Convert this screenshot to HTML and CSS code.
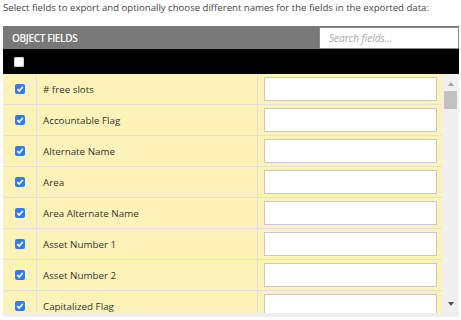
FILE: index.html
```html
<!DOCTYPE html>
<html>
<head>
<meta charset="utf-8">
<link rel="stylesheet" href="styles.css">
</head>
<body>
<p class="intro">Select fields to export and optionally choose different names for the fields in the exported data:</p>
<div class="grid">
  <div class="head">
    <span class="title">OBJECT FIELDS</span>
    <input class="search" type="text" placeholder="Search fields...">
  </div>
  <div class="selectall"><span class="box"></span></div>
  <div class="body">
    <div class="rows">
      <div class="row"><div class="c1"><span class="chk"><svg viewBox="0 0 10 10"><path d="M2.3 5.2 L4.2 7 L7.8 2.9" /></svg></span></div><div class="c2"># free slots</div><div class="c3"><input class="name" type="text"></div></div>
      <div class="row"><div class="c1"><span class="chk"><svg viewBox="0 0 10 10"><path d="M2.3 5.2 L4.2 7 L7.8 2.9" /></svg></span></div><div class="c2">Accountable Flag</div><div class="c3"><input class="name" type="text"></div></div>
      <div class="row"><div class="c1"><span class="chk"><svg viewBox="0 0 10 10"><path d="M2.3 5.2 L4.2 7 L7.8 2.9" /></svg></span></div><div class="c2">Alternate Name</div><div class="c3"><input class="name" type="text"></div></div>
      <div class="row"><div class="c1"><span class="chk"><svg viewBox="0 0 10 10"><path d="M2.3 5.2 L4.2 7 L7.8 2.9" /></svg></span></div><div class="c2">Area</div><div class="c3"><input class="name" type="text"></div></div>
      <div class="row"><div class="c1"><span class="chk"><svg viewBox="0 0 10 10"><path d="M2.3 5.2 L4.2 7 L7.8 2.9" /></svg></span></div><div class="c2">Area Alternate Name</div><div class="c3"><input class="name" type="text"></div></div>
      <div class="row"><div class="c1"><span class="chk"><svg viewBox="0 0 10 10"><path d="M2.3 5.2 L4.2 7 L7.8 2.9" /></svg></span></div><div class="c2">Asset Number 1</div><div class="c3"><input class="name" type="text"></div></div>
      <div class="row"><div class="c1"><span class="chk"><svg viewBox="0 0 10 10"><path d="M2.3 5.2 L4.2 7 L7.8 2.9" /></svg></span></div><div class="c2">Asset Number 2</div><div class="c3"><input class="name" type="text"></div></div>
      <div class="row"><div class="c1"><span class="chk"><svg viewBox="0 0 10 10"><path d="M2.3 5.2 L4.2 7 L7.8 2.9" /></svg></span></div><div class="c2">Capitalized Flag</div><div class="c3"><input class="name" type="text"></div></div>
    </div>
    <div class="scrollbar">
      <span class="up"></span>
      <span class="thumb"></span>
      <span class="spacer"></span>
      <span class="down"></span>
    </div>
  </div>
  <div class="strip"></div>
</div>
</body>
</html>
```
FILE: styles.css
```css
html, body {
  margin: 0;
  padding: 0;
  background: #ffffff;
}
body {
  font-family: "Open Sans", "DejaVu Sans", sans-serif;
  color: #333333;
  width: 461px;
  height: 320px;
  overflow: hidden;
}
.intro {
  margin: 0;
  padding: 1px 0 0 3px;
  height: 25px;
  font-size: 9.6px;
  line-height: 14px;
  color: #444444;
  white-space: nowrap;
}
.grid {
  margin: 0 2px 0 3px;
}
.head {
  height: 23px;
  background: #787878;
  display: flex;
  align-items: center;
  justify-content: space-between;
}
.title {
  padding-left: 9px;
  color: #ffffff;
  font-weight: 600;
  font-size: 10px;
  letter-spacing: -0.35px;
}
.search {
  box-sizing: border-box;
  width: 140px;
  height: 22px;
  margin: 1px 0 0 0;
  border: 1px solid #8a8a8a;
  background: #ffffff;
  padding: 0 9px;
  font-family: "Open Sans", sans-serif;
  font-size: 10px;
  font-style: italic;
  outline: none;
}
.search::placeholder {
  color: #a8a8a8;
}
.selectall {
  height: 25px;
  background: #000000;
  display: flex;
  align-items: center;
  padding-left: 11px;
}
.box {
  width: 8px;
  height: 8px;
  background: #ffffff;
  border: 1px solid #cfcfcf;
  border-radius: 1px;
}
.body {
  height: 239px;
  display: flex;
  overflow: hidden;
}
.rows {
  flex: 1;
  background: #fdf3b9;
}
.row {
  display: flex;
  height: 30px;
  border-bottom: 1px solid #e1e1dc;
}
.c1 {
  width: 34px;
  border-right: 1px solid #e1e1dc;
  display: flex;
  align-items: center;
  padding-left: 12px;
  box-sizing: border-box;
}
.chk {
  width: 10px;
  height: 10px;
  border-radius: 2px;
  background: #2d7cf6;
  display: flex;
}
.chk svg {
  width: 10px;
  height: 10px;
}
.chk path {
  fill: none;
  stroke: #ffffff;
  stroke-width: 1.6;
}
.c2 {
  width: 221px;
  border-right: 1px solid #e1e1dc;
  display: flex;
  align-items: center;
  padding-left: 6px;
  box-sizing: border-box;
  font-size: 9.8px;
  color: #333333;
}
.c3 {
  flex: 1;
  display: flex;
  align-items: center;
  padding: 0 5px 0 6px;
}
.name {
  box-sizing: border-box;
  width: 100%;
  height: 24px;
  border: 1px solid #c8c8c8;
  background: #ffffff;
  outline: none;
}
.scrollbar {
  width: 17px;
  background: #f0f0f0;
  display: flex;
  flex-direction: column;
  align-items: center;
}
.up {
  margin-top: 8px;
  width: 0;
  height: 0;
  border-left: 3.5px solid transparent;
  border-right: 3.5px solid transparent;
  border-bottom: 4px solid #a3a3a3;
}
.thumb {
  margin-top: 5px;
  width: 13px;
  height: 18px;
  background: #c1c1c1;
}
.spacer {
  flex: 1;
}
.down {
  margin-bottom: 7px;
  width: 0;
  height: 0;
  border-left: 3.5px solid transparent;
  border-right: 3.5px solid transparent;
  border-top: 4px solid #505050;
}
.strip {
  height: 4px;
  background: #eeeeee;
}
```
